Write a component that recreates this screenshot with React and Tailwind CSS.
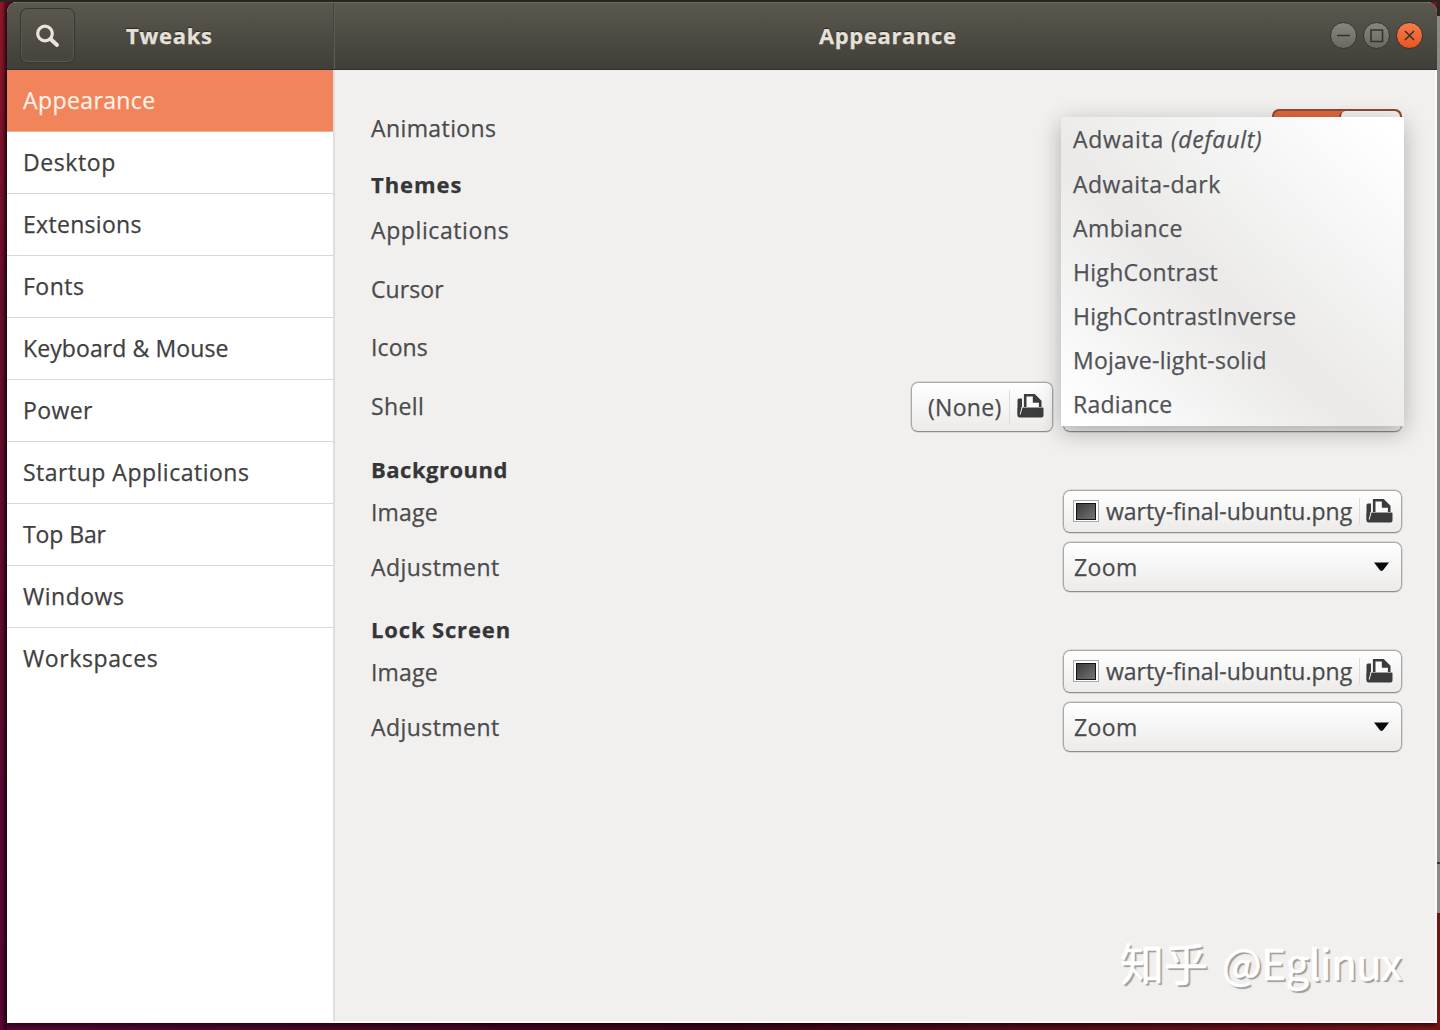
const SIDEBAR = [
  ["Appearance", "tracking-[0.4px]"],
  ["Desktop", "tracking-[0.6px]"],
  ["Extensions", "tracking-[0.3px]"],
  ["Fonts", "tracking-[0.5px]"],
  ["Keyboard & Mouse", "tracking-[0.1px]"],
  ["Power", "tracking-[0.4px]"],
  ["Startup Applications", "tracking-[0.5px]"],
  ["Top Bar", "tracking-[-0.1px]"],
  ["Windows", "tracking-[0.5px]"],
  ["Workspaces", "tracking-[0.6px]"],
];

const THEMES = [
  ["Adwaita-dark", "tracking-[0.5px]"],
  ["Ambiance", "tracking-[0.4px]"],
  ["HighContrast", "tracking-[0.3px]"],
  ["HighContrastInverse", "tracking-[0.2px]"],
  ["Mojave-light-solid", "tracking-[0.25px]"],
  ["Radiance", "tracking-[0.2px]"],
];

const BOX =
  "flex items-center rounded-[7px] border border-[#a9a6a3] border-b-[#8f8d8a] bg-linear-to-b from-white to-[#edebea] shadow-[0_0_0_0.5px_#c4c2c0]";

function OpenIcon() {
  return (
    <svg width="27" height="26" viewBox="0 0 27 26" className="shrink-0">
      <path d="M8 15V1.500h9.500L23.500 8v7" fill="#fdfdfd" />
      <path d="M8.200 14V2.200h9l6 6V14" fill="none" stroke="#3c3c3c" strokeWidth="2.600" />
      <path d="M15.800 1v8.700h8.700z" fill="#3c3c3c" />
      <path d="M5 5.500H2A1.500 1.500 0 0 0 .5 7v16L3.800 14.500H5z" fill="#3c3c3c" />
      <path d="M5.600 14.500H25.500a1 1 0 0 1 1 1V22.500a2 2 0 0 1-2 2H2.500A1.800 1.800 0 0 1 .6 22.700V15z" fill="#3c3c3c" />
      <path d="M5.300 13.500L3.200 21.500" stroke="#f4f3f2" strokeWidth="1" />
    </svg>
  );
}

function Row({ label, tracking, className, up, children }) {
  return (
    <div className={`flex items-center justify-between ${className}`}>
      <span className={`leading-8 ${tracking} ${up ? "mb-[2px]" : ""}`}>{label}</span>
      {children}
    </div>
  );
}

function Heading({ children, className }) {
  return (
    <h2 className={`flex items-center pb-[2px] text-[22px] font-bold text-[#353638] ${className}`}>
      {children}
    </h2>
  );
}

function Combo({ children }) {
  return (
    <div className={`${BOX} h-[50px] w-[339px] justify-between pr-[11px] pl-[10px] tracking-[0.39px]`}>
      <span>{children}</span>
      <svg width="17" height="10" viewBox="0 0 17 10">
        <path d="M1 .5h15L10 8.200Q8.500 9.800 7 8.200z" fill="#0c0c0c" />
      </svg>
    </div>
  );
}

function FileChooser() {
  return (
    <div className={`${BOX} h-[43px] w-[339px] pl-[9px]`}>
      <span className="mb-px flex h-[22px] w-[26px] items-center justify-center border border-[#aaa] bg-white">
        <span className="h-[17px] w-[20px] border border-[#151515] bg-linear-to-br from-[#3c3c3c] to-[#747474]" />
      </span>
      <span className="ml-[7px] w-[248px] whitespace-nowrap">warty-final-ubuntu.png</span>
      <span className="ml-[5px] h-[27px] w-px bg-[#dedbd9]" />
      <span className="mb-[2px] ml-[6px]">
        <OpenIcon />
      </span>
    </div>
  );
}

function WindowButton({ close, children }) {
  return (
    <span
      className={`flex size-[27px] items-center justify-center rounded-full border border-[#37362f] ${
        close ? "bg-linear-to-b from-[#f87a4c] to-[#e8541f]" : "bg-linear-to-b from-[#86857f] to-[#696861]"
      }`}
    >
      <svg width="25" height="25" viewBox="0 0 25 25" fill="none" stroke="#34332e" strokeWidth="1.600">
        {children}
      </svg>
    </span>
  );
}

function ThemeMenu() {
  return (
    <div className="absolute top-[117px] left-[1061px] z-10 h-[309px] w-[343px] bg-[linear-gradient(to_bottom_left,#ffffff_5%,#ebeae9_54%,#ebeae9_58%,#ffffff_97%)] pl-[12px] text-[#505256] shadow-[0_6px_22px_rgba(0,0,0,0.28)]">
      <div className="flex h-[45px] items-center">
        <span className="tracking-[0.7px]">Adwaita</span>
        <span className="ml-[7px] tracking-[0.75px] italic">(default)</span>
      </div>
      {THEMES.map(([name, tracking]) => (
        <div key={name} className={`flex h-11 items-center ${tracking}`}>
          {name}
        </div>
      ))}
    </div>
  );
}

export default function App() {
  return (
    <div className="relative flex h-[1030px] w-[1440px] overflow-hidden bg-linear-to-r from-[#560635] via-[#3d0619] to-[#7d1519] pt-[2px] font-['Open_Sans',sans-serif] text-[23px] text-[#4a4b4d] [-webkit-text-stroke:0.25px_currentColor]">
      <div className="absolute top-0 left-0 h-[2px] w-full bg-[#292622]" />
      <div className="h-[1028px] w-[7px] shrink-0 bg-[linear-gradient(to_right,transparent_30%,rgba(0,0,0,0.55)),linear-gradient(to_bottom,#8c1728,#650d2b_30%,#560635)]" />
      <div className="flex h-[1021px] w-[1430px] shrink-0 flex-col overflow-hidden rounded-t-[10px] bg-[#f1f0ee] shadow-[0_2px_5px_rgba(0,0,0,0.7)]">
        <header className="flex h-[68px] shrink-0 border-t border-b border-t-[#6c6a60] border-b-[#2e2d29] bg-linear-to-b from-[#5b584e] to-[#3f3e38] text-[22px] font-bold text-[#e6e1d8] [text-shadow:0_-1px_1px_#2b2a26]">
          <div className="flex w-[327px] items-center border-r border-[#464540] pb-px pl-[13px]">
            <span className="flex size-[55px] items-center justify-center rounded-[7px] border border-[#37362f] bg-linear-to-b from-[#5a574e] to-[#45443d] shadow-[inset_0_0_0_1px_#5a584f]">
              <svg width="26" height="26" viewBox="0 0 26 26" fill="none" stroke="#e9e5dd" strokeWidth="3.200">
                <circle cx="10" cy="10.500" r="7.300" />
                <path d="M15.500 16l6.500 6" strokeWidth="4" strokeLinecap="round" />
              </svg>
            </span>
            <span className="mb-px ml-[51px] tracking-[0.7px]">Tweaks</span>
          </div>
          <div className="flex flex-1 items-center border-l border-[#5d5b52] pb-px">
            <span className="mb-px ml-[484px] flex-1 tracking-[0.63px]">Appearance</span>
            <div className="mr-[14px] flex gap-[6px]">
              <WindowButton>
                <path d="M6 12.500h13" />
              </WindowButton>
              <WindowButton>
                <path d="M7 7h11.500v11.500h-11.500z" />
              </WindowButton>
              <WindowButton close>
                <path d="M8 8l9 9M17 8l-9 9" />
              </WindowButton>
            </div>
          </div>
        </header>
        <div className="flex min-h-0 flex-1 border-b-2 border-[#fbfbfa]">
          <nav className="w-[328px] shrink-0 border-r-2 border-[#dfdedd] bg-white">
            {SIDEBAR.map(([name, tracking], i) => (
              <div
                key={name}
                className={`flex h-[62px] items-center border-b pl-[16px] ${tracking} ${
                  i === 0
                    ? "border-[#f5ad90] bg-[#f1845a] text-[#fdf1e6]"
                    : i === SIDEBAR.length - 1
                      ? "border-transparent text-[#3f4042]"
                      : "border-[#d9d8d7] text-[#3f4042]"
                }`}
              >
                {name}
              </div>
            ))}
          </nav>
          <main className="flex-1 border-r-2 border-[#fafafa] pt-[39px] pr-[33px] pl-[36px]">
            <Row label="Animations" tracking="tracking-[0.4px]" className="h-[38px]">
              <div className="flex h-[38px] w-[130px] rounded-[7px] border-2 border-[#8b4a35] bg-[#e0683a]">
                <span className="ml-auto w-[61px] rounded-[6px] border-l-2 border-[#8b4a35] bg-[#f3f2f1]" />
              </div>
            </Row>
            <Heading className="mt-[18px] h-[41px] tracking-[0.95px]">Themes</Heading>
            <Row label="Applications" tracking="tracking-[0.6px]" up className="h-[50px]">
              <Combo />
            </Row>
            <Row label="Cursor" tracking="tracking-[0.1px]" up className="mt-[9px] h-[50px]">
              <Combo />
            </Row>
            <Row label="Icons" tracking="tracking-[0.1px]" up className="mt-[8px] h-[50px]">
              <Combo />
            </Row>
            <Row label="Shell" tracking="tracking-[0.4px]" up className="mt-[9px] h-[50px]">
              <div className="flex gap-[10px]">
                <div className={`${BOX} h-[50px] w-[142px] pl-[16px]`}>
                  <span className="w-[75px] tracking-[0.3px]">(None)</span>
                  <span className="ml-[6px] h-[34px] w-px bg-[#dedbd9]" />
                  <span className="mb-[2px] ml-[7px]">
                    <OpenIcon />
                  </span>
                </div>
                <Combo />
              </div>
            </Row>
            <Heading className="mt-[18px] h-[40px] tracking-[0.5px]">Background</Heading>
            <Row label="Image" tracking="tracking-[0.2px]" className="h-[43px]">
              <FileChooser />
            </Row>
            <Row label="Adjustment" tracking="tracking-[0.44px]" className="mt-[9px] h-[50px]">
              <Combo>Zoom</Combo>
            </Row>
            <Heading className="mt-[18px] h-[40px] tracking-[0.85px]">Lock Screen</Heading>
            <Row label="Image" tracking="tracking-[0.2px]" className="h-[43px]">
              <FileChooser />
            </Row>
            <Row label="Adjustment" tracking="tracking-[0.44px]" className="mt-[9px] h-[50px]">
              <Combo>Zoom</Combo>
            </Row>
          </main>
        </div>
      </div>
      <div className="flex w-[3px] shrink-0 flex-col">
        <div className="h-[14px] bg-[#292622]" />
        <div className="h-[846px] bg-[#8b8986]" />
        <div className="h-[2px] bg-[#3a3937]" />
        <div className="h-[49px] bg-[#8b8986]" />
        <div className="flex-1 bg-[#711512]" />
      </div>
      <ThemeMenu />
      <div className="absolute top-[930px] left-[1120px] flex gap-[14px] font-['Noto_Sans_CJK_SC',sans-serif] text-[44px] leading-[64px] text-white [-webkit-text-stroke:0.5px_white] [text-shadow:2px_2px_1px_#9d9c9b]">
        <span>知乎</span>
        <span className="text-[42px] tracking-[-0.5px]">@Eglinux</span>
      </div>
    </div>
  );
}
